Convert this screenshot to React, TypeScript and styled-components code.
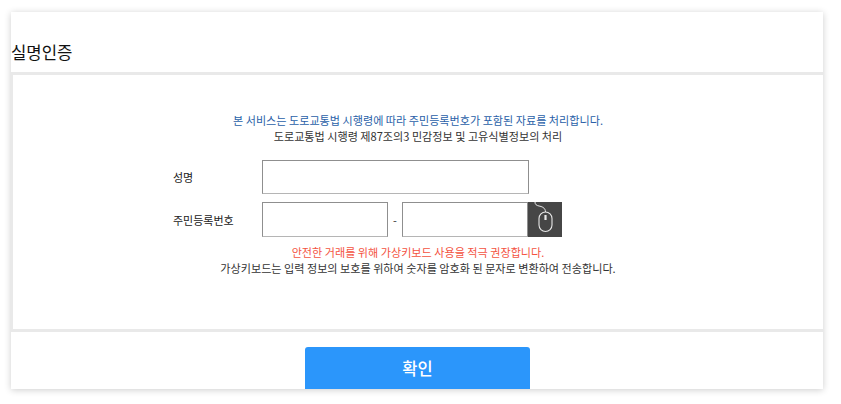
import React from 'react'
import styled, { createGlobalStyle } from 'styled-components'

const GlobalStyle = createGlobalStyle`
  html, body, #root {
    height: 100%;
  }
  body {
    margin: 0;
    background: #fff;
    font-family: "Noto Sans CJK KR", "Noto Sans", sans-serif;
  }
`

const Page = styled.div`
  height: 100%;
  box-sizing: border-box;
  padding: 12px 0 0 11px;
`

const Card = styled.div`
  width: 812px;
  height: 377px;
  background: #fff;
  box-shadow: 0 1px 7px rgba(0, 0, 0, 0.2);
  display: flex;
  flex-direction: column;
  overflow: hidden;
`

const Title = styled.h1`
  flex: none;
  margin: 0;
  height: 60px;
  box-sizing: border-box;
  padding-top: 28px;
  font-size: 16.700px;
  line-height: 24px;
  font-weight: 400;
  color: #111;
`

const Divider = styled.div`
  flex: none;
  height: 3px;
  background: #e9e9e9;
`

const Body = styled.div`
  flex: none;
  height: 254px;
  box-sizing: border-box;
  border-left: 2px solid #e9e9e9;
  padding-top: 37px;
`

const Notice = styled.p<{ $color: string }>`
  margin: 0;
  font-size: 11.100px;
  line-height: 16px;
  text-align: center;
  color: ${({ $color }) => $color};
`

const Form = styled.div`
  margin: 16px 0 7px 160px;
  display: flex;
  flex-direction: column;
  gap: 8px;
`

const Row = styled.div`
  display: flex;
  align-items: center;
`

const Label = styled.label`
  width: 89px;
  font-size: 11px;
  color: #222;
`

const Input = styled.input<{ $width: number; $height: number }>`
  width: ${({ $width }) => $width}px;
  height: ${({ $height }) => $height}px;
  box-sizing: border-box;
  padding: 0 6px;
  border: 1px solid #8f8f8f;
  border-bottom-color: #b5b5b5;
  background: #fff;
  outline: none;
`

const Dash = styled.span`
  width: 14px;
  text-align: center;
  font-size: 11px;
  color: #333;
`

const MouseButton = styled.button`
  width: 34px;
  height: 35px;
  padding: 0;
  border: 0;
  background: #464646;
  display: flex;
`

const Footer = styled.div`
  flex: 1;
  min-height: 0;
  display: flex;
  align-items: flex-start;
  justify-content: center;
  padding-top: 15px;
`

const Confirm = styled.button`
  flex: none;
  width: 225px;
  height: 45px;
  border: 0;
  border-radius: 3px 3px 0 0;
  background: #2b96fb;
  color: #fff;
  font-family: inherit;
  font-size: 16.500px;
  font-weight: 500;
  padding: 0 0 4px 1px;
`

const MouseIcon = () => (
  <svg width="34" height="35" viewBox="0 0 34 35" fill="none" stroke="#e8e8e8">
    <path d="M7 0c0 2.500 1.500 3.500 4 4s6.500 1.500 6.500 6" strokeWidth="1" />
    <rect x="11" y="10" width="13" height="19.500" rx="6.500" strokeWidth="1.100" />
    <path d="M17.500 13v5" strokeWidth="2.200" />
  </svg>
)

export default function App() {
  return (
    <Page>
      <GlobalStyle />
      <Card>
        <Title>실명인증</Title>
        <Divider />
        <Body>
          <Notice $color="#2a5fa8">본 서비스는 도로교통법 시행령에 따라 주민등록번호가 포함된 자료를 처리합니다.</Notice>
          <Notice $color="#333">도로교통법 시행령 제87조의3 민감정보 및 고유식별정보의 처리</Notice>
          <Form>
            <Row>
              <Label>성명</Label>
              <Input $width={267} $height={34} />
            </Row>
            <Row>
              <Label>주민등록번호</Label>
              <Input $width={126} $height={35} />
              <Dash>-</Dash>
              <Input $width={126} $height={35} />
              <MouseButton type="button" aria-label="가상키보드">
                <MouseIcon />
              </MouseButton>
            </Row>
          </Form>
          <Notice $color="#f4533f">안전한 거래를 위해 가상키보드 사용을 적극 권장합니다.</Notice>
          <Notice $color="#333">가상키보드는 입력 정보의 보호를 위하여 숫자를 암호화 된 문자로 변환하여 전송합니다.</Notice>
        </Body>
        <Divider />
        <Footer>
          <Confirm type="button">확인</Confirm>
        </Footer>
      </Card>
    </Page>
  )
}
